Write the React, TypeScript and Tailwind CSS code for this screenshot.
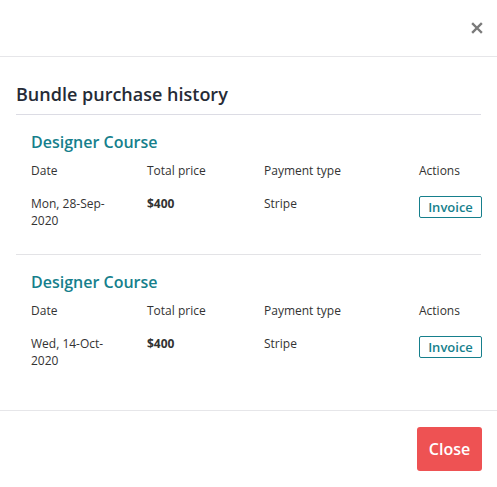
import * as React from "react";

type Purchase = {
  course: string;
  date: string;
  price: string;
  payment: string;
};

const purchases: Purchase[] = [
  { course: "Designer Course", date: "Mon, 28-Sep-2020", price: "$400", payment: "Stripe" },
  { course: "Designer Course", date: "Wed, 14-Oct-2020", price: "$400", payment: "Stripe" },
];

const PurchaseBlock: React.FC<{ item: Purchase; last: boolean }> = ({ item, last }) => (
  <div className={`px-[15px] pt-[16px] pb-[25px] ${last ? "" : "border-b border-[#e3e3e6]"}`}>
    <h3 className="text-[16px] leading-[22px] font-semibold text-[#167f8c]">{item.course}</h3>
    <div className="mt-[9px] grid grid-cols-[116px_117px_155px_1fr] text-[12px] leading-[18px] text-[#333]">
      <div>Date</div>
      <div>Total price</div>
      <div>Payment type</div>
      <div>Actions</div>
    </div>
    <div className="mt-[15px] grid grid-cols-[116px_117px_155px_1fr] text-[12px] leading-[17px] text-[#333]">
      <div className="w-[80px]">{item.date}</div>
      <div className="font-bold">{item.price}</div>
      <div>{item.payment}</div>
      <div>
        <button className="mt-[1px] h-[22px] w-[63px] rounded-[2px] border border-[#167f8c] text-[13px] font-semibold leading-[20px] text-[#167f8c]">
          Invoice
        </button>
      </div>
    </div>
  </div>
);

export default function App() {
  return (
    <div className="min-h-screen w-full bg-white font-['Open_Sans',sans-serif]">
      <div className="flex h-[57px] items-center justify-end border-b border-[#e6e6e9] px-[16px]">
        <button className="mr-[-2px] text-[#7a7a7a]" aria-label="close">
          <svg width="12" height="12" viewBox="0 0 12 12">
            <path d="M2 2L10 10M10 2L2 10" stroke="currentColor" strokeWidth="2.4" strokeLinecap="square" />
          </svg>
        </button>
      </div>
      <div className="px-[16px] pt-[25px] pb-[16px]">
        <h2 className="border-b border-[#dcdce4] pb-[8px] text-[18px] leading-[24px] font-semibold text-[#262b36]">
          Bundle purchase history
        </h2>
        {purchases.map((p, i) => (
          <PurchaseBlock key={i} item={p} last={i === purchases.length - 1} />
        ))}
      </div>
      <div className="flex justify-end border-t border-[#e6e6e9] px-[15px] pt-[16px] pb-[17px]">
        <button className="h-[44px] w-[65px] rounded-[3px] bg-[#ee5253] text-[16px] font-semibold text-white">
          Close
        </button>
      </div>
    </div>
  );
}
